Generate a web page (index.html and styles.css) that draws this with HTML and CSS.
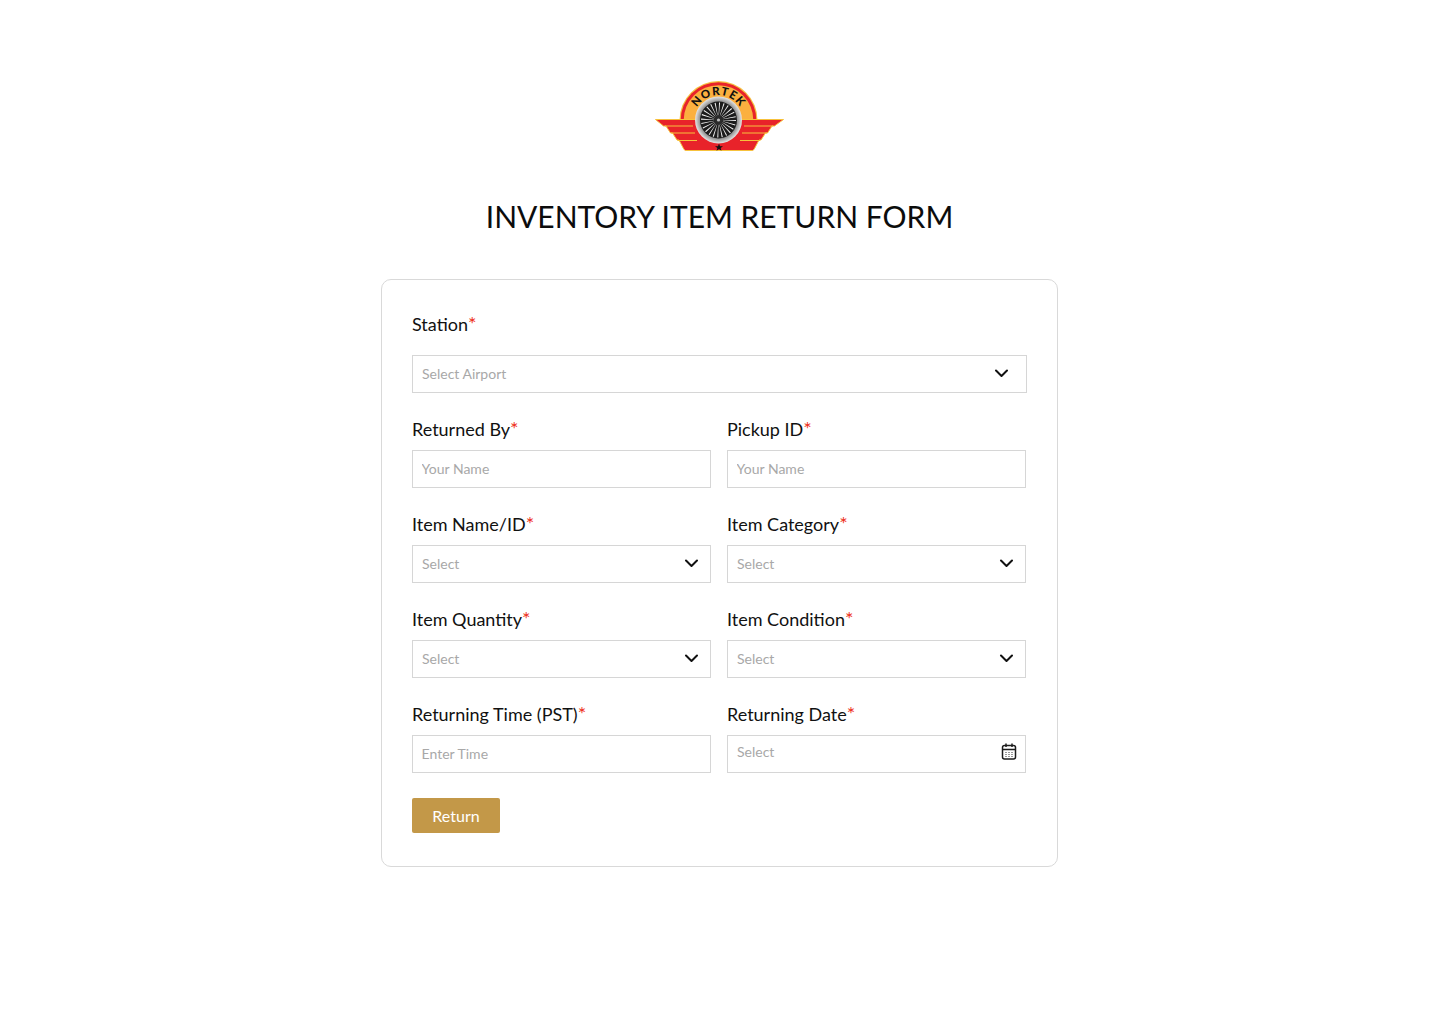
FILE: index.html
```html
<!DOCTYPE html>
<html lang="en">
<head>
<meta charset="utf-8">
<title>Inventory Item Return Form</title>
<link rel="stylesheet" href="styles.css">
</head>
<body>
<main class="page">
  <svg class="logo" viewBox="0 0 129 72" width="129" height="72" aria-label="Nortek logo">
    <defs>
      <radialGradient id="ring" cx="0.5" cy="0.5" r="0.5">
        <stop offset="0.7" stop-color="#6b6b6b"/>
        <stop offset="0.88" stop-color="#b5b5b5"/>
        <stop offset="1" stop-color="#e6e6e6"/>
      </radialGradient>
      <path id="arc" d="M38.500 40 A25 25 0 0 1 88.500 40"/>
    </defs>
    <path d="M24.500 44 V40 A39 39 0 0 1 102.500 40 V44 Z" fill="#f5c242"/>
    <path d="M25.700 44 V40 A37.800 37.800 0 0 1 101.300 40 V44 Z" fill="#e8232a"/>
    <path d="M28.700 44 V40 A34.800 34.800 0 0 1 98.300 40 V44 Z" fill="#fbb03f"/>
    <path d="M0.500 39.500 H128.500 L119.500 46 H117 L112.500 53 H110.500 L106 60 H104 L99 69.500 L97.500 70.500 H30.500 L29 69.500 L24 60 H22 L17.500 53 H15.500 L11 46 H8.500 Z" fill="#e8232a" stroke="#f7c23c" stroke-width="1"/>
    <path class="wing-line" d="M10 46 H38 M16 53 H40 M22.500 60.500 H42 M89 46 H118 M87 53 H112 M85 60.500 H105"/>
    <circle cx="63.500" cy="40" r="23.500" fill="url(#ring)"/>
    <circle cx="63.500" cy="40" r="18.500" fill="#1c1c1c"/>
    <circle cx="63.500" cy="40" r="11" fill="none" stroke="#f2f2f2" stroke-width="13" stroke-dasharray="0.700 2.180"/>
    <circle cx="63.500" cy="40" r="4.500" fill="#2a2a2a"/>
    <circle cx="63.500" cy="40" r="1.600" fill="#bdbdbd"/>
    <polygon points="64,63.500 65,66.300 68,66.300 65.600,68 66.500,70.800 64,69.100 61.500,70.800 62.400,68 60,66.300 63,66.300" fill="#111"/>
    <text class="logo-text"><textPath href="#arc" startOffset="50%" text-anchor="middle">NORTEK</textPath></text>
  </svg>

  <h1 class="title">INVENTORY ITEM RETURN FORM</h1>

  <form class="card">
    <div class="field field-full">
      <label class="label label-station">Station<span class="req">*</span></label>
      <div class="control control-station">
        <span class="placeholder">Select Airport</span>
        <svg class="chevron" viewBox="0 0 14 9" width="14" height="9"><path d="M2 1.500 7.500 7 13 1.500"/></svg>
      </div>
    </div>

    <div class="field">
      <label class="label">Returned By<span class="req">*</span></label>
      <input class="control input" type="text" placeholder="Your Name">
    </div>
    <div class="field">
      <label class="label">Pickup ID<span class="req">*</span></label>
      <input class="control input" type="text" placeholder="Your Name">
    </div>

    <div class="field">
      <label class="label">Item Name/ID<span class="req">*</span></label>
      <div class="control">
        <span class="placeholder">Select</span>
        <svg class="chevron" viewBox="0 0 14 9" width="14" height="9"><path d="M2 1.500 7.500 7 13 1.500"/></svg>
      </div>
    </div>
    <div class="field">
      <label class="label">Item Category<span class="req">*</span></label>
      <div class="control">
        <span class="placeholder">Select</span>
        <svg class="chevron" viewBox="0 0 14 9" width="14" height="9"><path d="M2 1.500 7.500 7 13 1.500"/></svg>
      </div>
    </div>

    <div class="field">
      <label class="label">Item Quantity<span class="req">*</span></label>
      <div class="control">
        <span class="placeholder">Select</span>
        <svg class="chevron" viewBox="0 0 14 9" width="14" height="9"><path d="M2 1.500 7.500 7 13 1.500"/></svg>
      </div>
    </div>
    <div class="field">
      <label class="label">Item Condition<span class="req">*</span></label>
      <div class="control">
        <span class="placeholder">Select</span>
        <svg class="chevron" viewBox="0 0 14 9" width="14" height="9"><path d="M2 1.500 7.500 7 13 1.500"/></svg>
      </div>
    </div>

    <div class="field">
      <label class="label">Returning Time (PST)<span class="req">*</span></label>
      <input class="control input" type="text" placeholder="Enter Time">
    </div>
    <div class="field">
      <label class="label">Returning Date<span class="req">*</span></label>
      <div class="control control-date">
        <span class="placeholder">Select</span>
        <svg class="calendar" viewBox="0 0 16 17" width="16" height="17">
          <rect class="cal-body" x="1.500" y="2.500" width="13" height="13.500" rx="2"/>
          <path class="cal-line" d="M1.500 6.500 H14.500 M5 0.500 V4 M11 0.500 V4"/>
          <path class="cal-dots" d="M4.500 9.500 h7 M4.500 11.500 h7 M4.500 13.500 h7"/>
        </svg>
      </div>
    </div>

    <div class="actions">
      <button class="button" type="button">Return</button>
    </div>
  </form>
</main>
</body>
</html>
```
FILE: styles.css
```css
* { box-sizing: border-box; }

html, body { margin: 0; padding: 0; background: #fff; }

body {
  font-family: Lato, "Open Sans", sans-serif;
  color: #111;
}

.page {
  min-height: 1024px;
  display: flex;
  flex-direction: column;
  align-items: center;
  padding-top: 80px;
}

.logo { display: block; flex: none; margin-left: -1px; }

.logo-text {
  font-family: Lato, sans-serif;
  font-weight: 900;
  font-size: 11.500px;
  letter-spacing: 0.800px;
  fill: #111;
}

.wing-line { fill: none; stroke: #f7c23c; stroke-width: 1; }

.title {
  margin: 44px 0 0 -1px;
  font-size: 30px;
  line-height: 40px;
  font-weight: 400;
  color: #0c0c0c;
}

.card {
  width: 677px;
  margin: 43px 0 0 -1px;
  padding: 34px 30px 33px;
  border: 1px solid #d9d9d9;
  border-radius: 10px;
  display: grid;
  grid-template-columns: 299px 299px;
  column-gap: 16px;
  row-gap: 26px;
}

.field { display: flex; flex-direction: column; min-width: 0; }

.field-full { grid-column: 1 / -1; width: 615px; }

.label {
  display: block;
  font-size: 18px;
  line-height: 21px;
  margin-bottom: 10px;
}

.label-station { margin-bottom: 20px; }

.req { color: #ee2f1b; font-size: 20px; line-height: 0; }

.control {
  height: 38px;
  width: 100%;
  border: 1px solid #d6d6d6;
  background: #fff;
  padding: 0 12px 2px 9px;
  display: flex;
  align-items: center;
  justify-content: space-between;
  font-family: Lato, sans-serif;
  font-size: 14px;
  color: #111;
  border-radius: 0;
  outline: none;
}

.input { padding-left: 8.600px; }

.control-station { padding-right: 18px; }

.control-date { padding-right: 8px; padding-bottom: 6px; }

.input::placeholder { color: #a8a8a8; opacity: 1; }

.placeholder { color: #a8a8a8; }

.chevron { display: block; flex: none; }
.chevron path { fill: none; stroke: #111; stroke-width: 2; stroke-linecap: round; stroke-linejoin: round; }

.calendar { display: block; flex: none; }
.cal-body { fill: none; stroke: #1c1c1c; stroke-width: 1.500; }
.cal-line { fill: none; stroke: #1c1c1c; stroke-width: 1.500; }
.cal-dots { fill: none; stroke: #333; stroke-width: 1.200; stroke-dasharray: 1 2; }

.actions { grid-column: 1 / -1; margin-top: -1px; }

.button {
  width: 88px;
  height: 35px;
  border: 0;
  border-radius: 2px;
  background: #c39848;
  color: #fff;
  font-family: Lato, sans-serif;
  font-size: 16px;
  padding: 0;
}
```
